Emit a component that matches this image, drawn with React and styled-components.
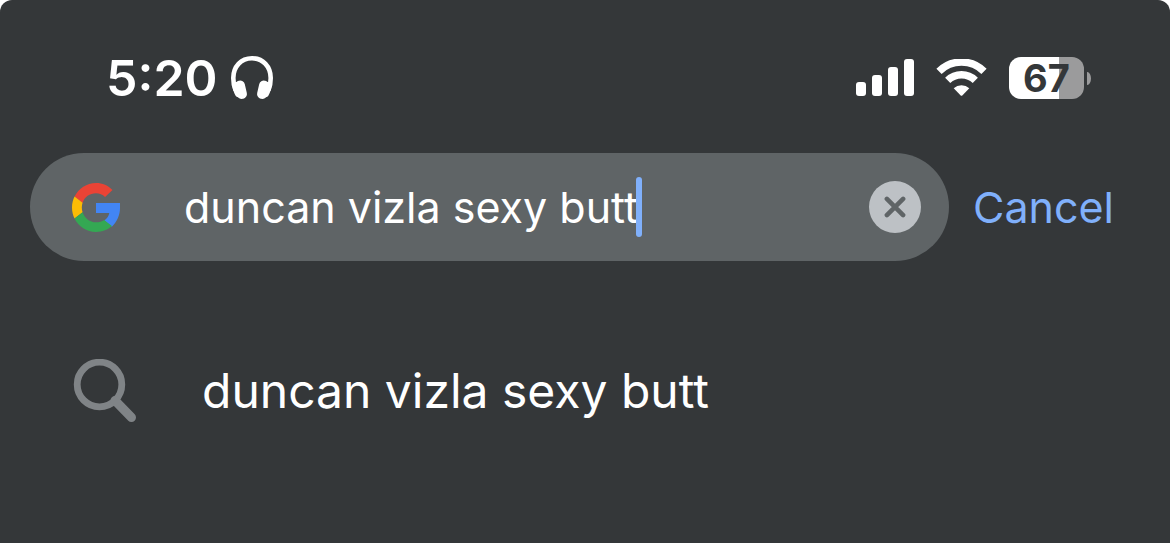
import React, { useRef, useState } from 'react'
import styled, { createGlobalStyle } from 'styled-components'

const App = () => {
    const [query, setQuery] = useState('duncan vizla sexy butt')
    const inputRef = useRef(null)
    const clearQuery = () => {
        setQuery('')
        inputRef.current.focus()
    }
  return (
    <>
        <GlobalStyle />
        <Screen>
            <StatusBar>
                <StatusGroup>
                    <Time>5:20</Time>
                    <HeadphonesIcon />
                </StatusGroup>
                <StatusGroup>
                    <SignalIcon />
                    <WifiIcon />
                    <Battery>
                        <BatteryBody $level={67}>67</BatteryBody>
                        <BatteryTip />
                    </Battery>
                </StatusGroup>
            </StatusBar>
            <SearchBar>
                <Field onClick={()=>inputRef.current.focus()}>
                    <GoogleIcon />
                    <Typed>
                        <Input
                            ref={inputRef}
                            type="text"
                            aria-label="Search"
                            spellCheck={false}
                            value={query}
                            onChange={(e)=>setQuery(e.target.value)}
                        />
                        <Caret />
                    </Typed>
                    <ClearButton type="button" aria-label="Clear text" onClick={clearQuery}>
                        <svg width="22" height="22" viewBox="0 0 22 22" fill="none" stroke="#5f6466" strokeWidth="4.6" strokeLinecap="round">
                            <path d="M2.9 2.9 19.1 19.1M19.1 2.9 2.9 19.1" />
                        </svg>
                    </ClearButton>
                </Field>
                <CancelButton type="button">Cancel</CancelButton>
            </SearchBar>
            <Suggestions>
                <li>
                    <Suggestion type="button">
                        <SearchIcon />
                        <span>duncan vizla sexy butt</span>
                    </Suggestion>
                </li>
            </Suggestions>
        </Screen>
    </>
  )
}

export default App

const HeadphonesIcon = () => (
    <svg width="42" height="44" viewBox="0 0 42 44" fill="#fff" aria-hidden="true">
        <path d="M4.500 34C2.700 30 2.300 26 2.300 22C2.300 10.500 10 2.300 21 2.300S39.700 10.500 39.700 22C39.700 26 39.300 30 37.500 34" fill="none" stroke="#fff" strokeWidth="4.600" />
        <rect x="5" y="24.500" width="10" height="18.500" rx="4.800" transform="rotate(-13 10 34)" />
        <rect x="27" y="24.500" width="10" height="18.500" rx="4.800" transform="rotate(13 32 34)" />
        <path d="M1 26C1.500 33 3 37 4.800 40Q6.500 42 9 41V26Z M41 26C40.500 33 39 37 37.200 40Q35.500 42 33 41V26Z" />
    </svg>
)

const SignalIcon = () => (
    <svg width="58" height="38" viewBox="0 0 58 38" fill="#fff" aria-hidden="true">
        <rect x="0" y="23" width="10" height="14" rx="3" />
        <rect x="16" y="16" width="10" height="21" rx="3" />
        <rect x="32" y="8" width="10" height="29" rx="3" />
        <rect x="48" y="0" width="10" height="37" rx="3" />
    </svg>
)

const WifiIcon = () => (
    <svg width="51" height="38" viewBox="0 0 51 38" aria-hidden="true">
        <path d="M3 12.300A32 32 0 0 1 48 12.300" fill="none" stroke="#fff" strokeWidth="7.400" />
        <path d="M11.700 21.300A19.800 19.800 0 0 1 39.300 21.300" fill="none" stroke="#fff" strokeWidth="7.400" />
        <path d="M17.700 29.200A11.500 11.500 0 0 1 33.300 29.200L26.300 36.500Q25.500 37.200 24.700 36.500Z" fill="#fff" />
    </svg>
)

const GoogleIcon = () => (
    <svg width="48" height="49" viewBox="2 2 44 44" preserveAspectRatio="none" aria-hidden="true">
        <path fill="#EA4335" d="M24 11.300c3.300 0 6 1.100 8.300 3.200l6.800-6.300C35.200 4.400 29.900 2 24 2 15.400 2 8 6.950 4.340 14.180l7.350 5.700C13.430 14.620 18.270 11.300 24 11.300z" />
        <path fill="#4285F4" d="M46 20H24v9h12.200c-.55 2.800-2.100 4.900-4.750 6.700l7.110 5.500C43.200 37 46 31 46 24.500z" />
        <path fill="#FBBC05" d="M11.690 28.180C11.250 26.860 11 25.450 11 24s.25-2.860.69-4.180l-7.350-5.700C2.850 17.090 2 20.450 2 24c0 3.550.85 6.910 2.340 9.880l7.350-5.700z" />
        <path fill="#34A853" d="M24 46c5.940 0 10.920-1.970 14.560-5.330l-7.110-5.520c-1.970 1.320-4.490 2.100-7.450 2.100-5.730 0-10.580-3.870-12.310-9.070l-7.350 5.700C7.960 41.070 15.400 46 24 46z" />
    </svg>
)

const SearchIcon = () => (
    <svg width="64" height="64" viewBox="0 0 64 64" fill="none" stroke="#808487" aria-hidden="true">
        <circle cx="26.500" cy="25.500" r="22.300" strokeWidth="6.800" />
        <path d="M42 41.500 58.500 58.500" strokeWidth="9" strokeLinecap="round" />
    </svg>
)

const GlobalStyle = createGlobalStyle`
    *{
        box-sizing:border-box;
    }
    body{
        margin:0;
        background:#fff;
        font-family: Inter, "Liberation Sans", sans-serif;
    }
    svg{
        display:block;
        flex-shrink:0;
    }
    button{
        font-family:inherit;
        border:none;
        padding:0;
        background:none;
        cursor:pointer;
    }
`;
const Screen = styled.main`
    min-height:100vh;
    padding-top:48px;
    background:#343739;
    border-radius:12px 12px 0 0;
    color:#fff;
`;
const StatusBar = styled.header`
    display:flex;
    justify-content:space-between;
    align-items:center;
    height:60px;
    padding:0 79px 0 106px;
`;
const StatusGroup = styled.div`
    display:flex;
    align-items:center;
    gap:22px;
    &:first-child{
        gap:13px;
    }
`;
const Time = styled.span`
    font-size:50px;
    line-height:60px;
    font-weight:600;
`;
const Battery = styled.div`
    display:flex;
    align-items:center;
    gap:3px;
`;
const BatteryBody = styled.div`
    width:75px;
    border-radius:12px;
    background:linear-gradient(to right, #fff ${(props)=>props.$level}%, #9b9b9c ${(props)=>props.$level}%);
    color:#343739;
    font-size:38px;
    line-height:42px;
    font-weight:700;
    text-align:center;
`;
const BatteryTip = styled.span`
    width:4px;
    height:13px;
    border-radius:0 4px 4px 0 / 0 7px 7px 0;
    background:#9b9b9c;
`;
const SearchBar = styled.form`
    display:flex;
    align-items:center;
    gap:24px;
    margin-top:45px;
    padding:0 56px 0 30px;
`;
const Field = styled.div`
    flex:1;
    min-width:0;
    display:flex;
    align-items:center;
    height:108px;
    padding:0 28px 0 42px;
    border-radius:54px;
    background:#5f6466;
`;
const Typed = styled.div`
    flex:1;
    min-width:0;
    display:flex;
    align-items:center;
    margin-left:64px;
`;
const Input = styled.input`
    field-sizing:content;
    min-width:0;
    padding:0;
    border:none;
    outline:none;
    background:none;
    color:#fff;
    caret-color:transparent;
    font-family:inherit;
    font-size:43px;
    line-height:56px;
`;
const Caret = styled.span`
    flex-shrink:0;
    width:6px;
    height:60px;
    margin-left:-2px;
    border-radius:3px;
    background:#80b0fb;
`;
const ClearButton = styled.button`
    display:flex;
    align-items:center;
    justify-content:center;
    width:52px;
    height:52px;
    border-radius:50%;
    background:#bdc1c5;
`;
const CancelButton = styled.button`
    color:#80b0fb;
    font-size:43px;
    line-height:56px;
`;
const Suggestions = styled.ul`
    list-style:none;
    margin:0;
    padding:96px 30px 0 73px;
`;
const Suggestion = styled.button`
    display:flex;
    align-items:center;
    gap:65px;
    width:100%;
    color:#fff;
    font-size:48px;
    line-height:68px;
    text-align:left;
`;
